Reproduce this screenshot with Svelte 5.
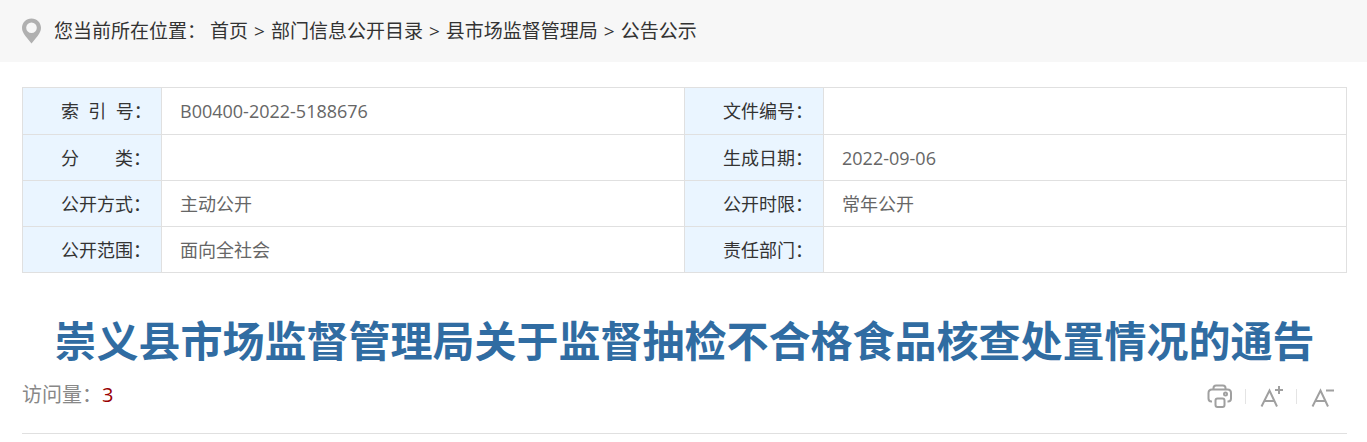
<script>
    const crumbs = ["首页", "部门信息公开目录", "县市场监督管理局", "公告公示"];
    const rows = [
        ["索\u00a0\u00a0引\u00a0\u00a0号：", "B00400-2022-5188676", "文件编号：", ""],
        ["分\u3000\u3000类：", "", "生成日期：", "2022-09-06"],
        ["公开方式：", "主动公开", "公开时限：", "常年公开"],
        ["公开范围：", "面向全社会", "责任部门：", ""],
    ];
    let visits = 3;
</script>

<nav class="position">
    <svg class="pin" viewBox="0 0 20 26" aria-hidden="true">
        <path
            fill="#b0b0b0"
            fill-rule="evenodd"
            d="M9.500 0.500C4.200 0.500 0 4.600 0 9.800c0 3 1.300 5.300 3.200 8L9.500 25.500 15.800 17.800c1.900-2.700 3.200-5 3.200-8C19 4.600 14.800 0.500 9.500 0.500zM9.500 4.500a5.300 5.300 0 1 1 0 10.600a5.300 5.300 0 0 1 0-10.600z"
        />
    </svg>
    <span class="where">您当前所在位置：</span>
    <div class="crumbs">
        {#each crumbs as name, i}
            {#if i > 0}<span>&gt;</span>{/if}
            <a href="#top">{name}</a>
        {/each}
    </div>
</nav>

<main>
    <table>
        <tbody>
            {#each rows as [labelA, valueA, labelB, valueB]}
                <tr>
                    <th scope="row">{labelA}</th>
                    <td>{valueA}</td>
                    <th scope="row">{labelB}</th>
                    <td>{valueB}</td>
                </tr>
            {/each}
        </tbody>
    </table>

    <h1>崇义县市场监督管理局关于监督抽检不合格食品核查处置情况的通告</h1>

    <div class="info">
        <p>访问量：<span class="count">{visits}</span></p>
        <div class="tools">
            <button aria-label="打印">
                <svg viewBox="0 0 26 26" aria-hidden="true">
                    <path d="M6.500 5V4Q6.500 1.500 9 1.500h7Q18.500 1.500 18.500 4v1" />
                    <path d="M5 17.500H4.500Q1.500 17.500 1.500 14.500V9Q1.500 5.500 5 5.500h15.500Q24 5.500 24 9v5.500q0 3-3 3H20.500" />
                    <rect x="8.500" y="14.500" width="9" height="8.500" rx="2" />
                    <circle cx="18.500" cy="10" r="1.500" />
                </svg>
            </button>
            <button aria-label="放大字号">
                <svg viewBox="0 0 26 26" aria-hidden="true">
                    <path d="M3.500 22.500 11.500 6.500 19 22.500M6 17h11M17 6h8M21 2v8" />
                </svg>
            </button>
            <button aria-label="缩小字号">
                <svg viewBox="0 0 26 26" aria-hidden="true">
                    <path d="M3.500 22.500 11.500 6.500 19 22.500M6 17h11M17 6.500h8" />
                </svg>
            </button>
        </div>
    </div>
</main>

<style>
    :global(body) {
        margin: 0;
        background: #fff;
        color: #333;
        font-family: "Open Sans", "Noto Sans CJK SC", sans-serif;
    }
    .position {
        display: flex;
        align-items: center;
        height: 62px;
        padding: 0 22px;
        background: #f7f7f7;
        font-size: 19px;
        line-height: 28px;
        white-space: nowrap;
    }
    .pin {
        width: 20px;
        height: 26px;
        margin-right: 12px;
    }
    .where {
        margin-right: 4px;
    }
    .crumbs {
        display: flex;
        gap: 6px;
    }
    a {
        color: #333;
        text-decoration: none;
    }
    main {
        padding: 25px 20px 0 22px;
    }
    table {
        width: 100%;
        table-layout: fixed;
        border-collapse: collapse;
        font-size: 18px;
        line-height: 28px;
    }
    th,
    td {
        box-sizing: border-box;
        height: 46px;
        padding: 0 0 0 18px;
        border: 1px solid #e0e0e0;
        text-align: left;
        font-weight: 400;
        white-space: nowrap;
    }
    tr:first-child > * {
        height: 47px;
    }
    th {
        width: 10.5%;
        padding-left: 38px;
        background: #eaf5ff;
    }
    td {
        color: #666;
    }
    h1 {
        margin: 37px 0 0;
        color: #306ca2;
        font-size: 42px;
        line-height: 62px;
        text-align: center;
    }
    .info {
        display: flex;
        justify-content: space-between;
        align-items: center;
        height: 61px;
        border-bottom: 1px solid #e0e0e0;
    }
    p {
        margin: 0 0 16px;
        color: #888;
        font-size: 20px;
        line-height: 28px;
    }
    .count {
        color: #900;
    }
    .tools {
        display: flex;
        margin-bottom: 12px;
    }
    button {
        display: flex;
        align-items: center;
        height: 15px;
        padding: 0 12px;
        border: 0;
        border-left: 1px solid #e4e4e4;
        background: none;
        cursor: pointer;
    }
    button:first-child {
        border-left: 0;
    }
    button svg {
        width: 26px;
        height: 26px;
        fill: none;
        stroke: #a0a0a0;
        stroke-width: 2;
    }
</style>
